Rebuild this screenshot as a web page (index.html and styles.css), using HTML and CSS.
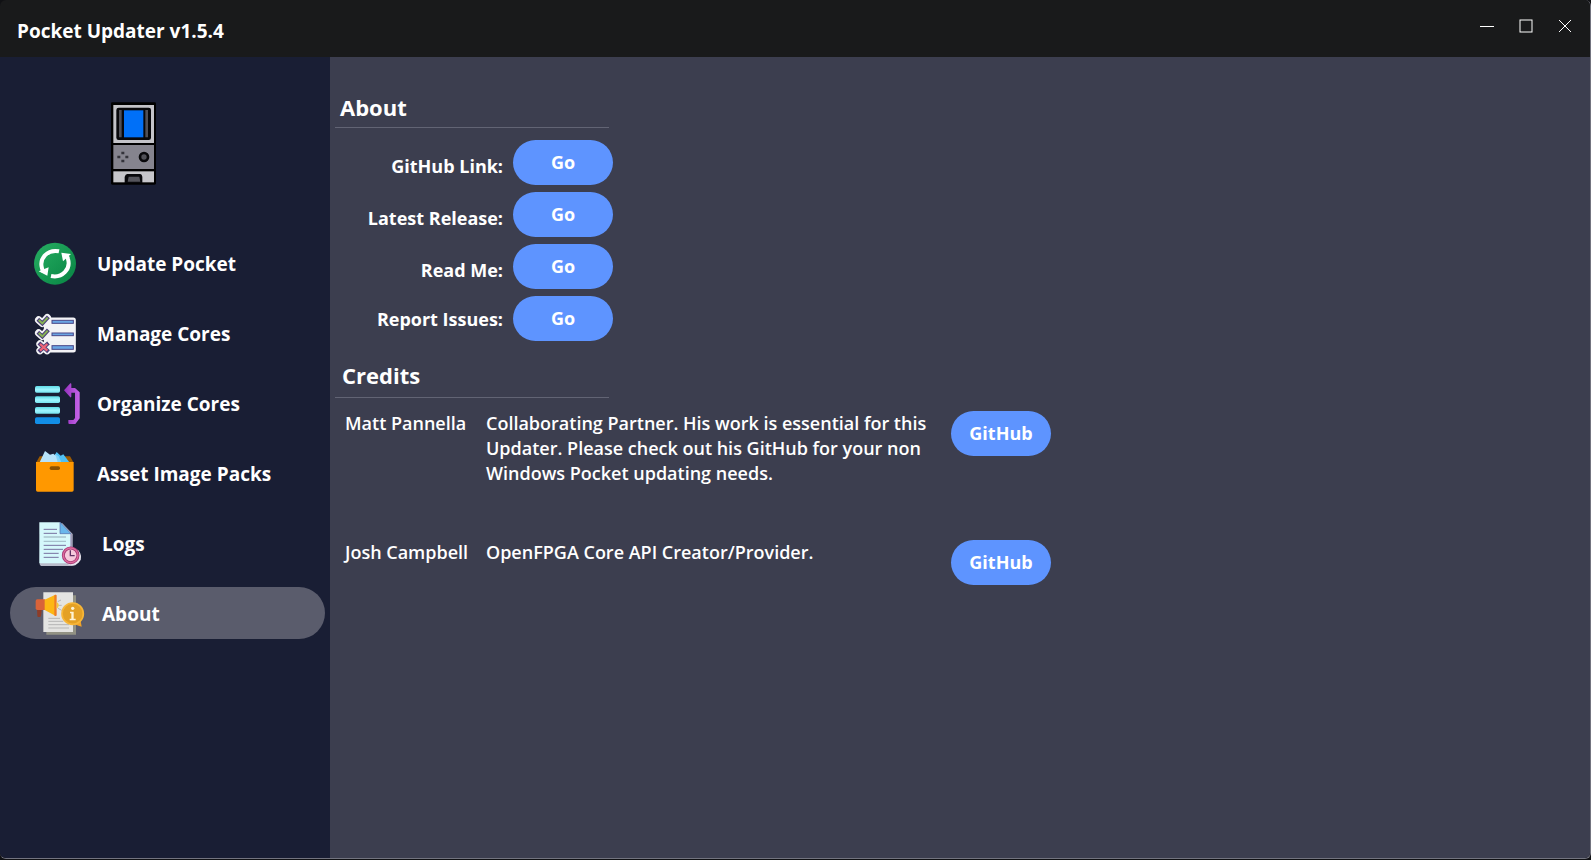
FILE: index.html
```html
<!DOCTYPE html>
<html lang="en">
<head>
<meta charset="utf-8">
<title>Pocket Updater v1.5.4</title>
<link rel="stylesheet" href="styles.css">
</head>
<body>
<div class="window">
  <header class="titlebar">
    <h1 class="titlebar-text">Pocket Updater v1.5.4</h1>
    <div class="window-controls">
      <button class="control" type="button" aria-label="Minimize"><svg viewBox="0 0 14 14"><path d="M0 7.500h14" /></svg></button>
      <button class="control" type="button" aria-label="Maximize"><svg viewBox="0 0 14 14"><rect x="1" y="1" width="12" height="12" /></svg></button>
      <button class="control" type="button" aria-label="Close"><svg viewBox="0 0 14 14"><path d="M1 1l12 12M13 1L1 13" /></svg></button>
    </div>
  </header>
  <div class="body">
    <aside class="sidebar">
      <svg class="logo" viewBox="333 307 135 247" aria-hidden="true">
        <rect x="333" y="307" width="135" height="247" rx="4" fill="#000"/>
        <rect x="340" y="315" width="122" height="114" fill="#c3c3c8"/>
        <rect x="349" y="323" width="104" height="97" rx="7" fill="#08080b"/>
        <path d="M357 330h8v82h-8zM436 330h8v82h-8z" fill="#505057"/>
        <rect x="372" y="331" width="58" height="81" fill="#0070f8"/>
        <rect x="340" y="435" width="122" height="72" fill="#85848e"/>
        <path d="M364 455h9v8h-9zM352 467h9v8h-9zM376 467h9v8h-9zM364 479h9v8h-9z" fill="#33333a"/>
        <circle cx="432" cy="471" r="12" fill="#505057" stroke="#08080b" stroke-width="8"/>
        <rect x="340" y="514" width="122" height="33" fill="#c6c6ca"/>
        <path d="M374 549v-18q2-9 8-9h38q6 0 7 9v18z" fill="#08080b"/>
        <path d="M383 545l3-15h32l3 15z" fill="#55555c"/>
      </svg>
      <nav class="nav">
        <button class="nav-item" type="button">
          <svg class="nav-icon" viewBox="36 27 162 144" aria-hidden="true">
            <defs><linearGradient id="green" x1="0" y1="0" x2="1" y2="1"><stop offset="0" stop-color="#27ae62"/><stop offset="1" stop-color="#078443"/></linearGradient></defs>
            <circle cx="105" cy="101" r="63" fill="url(#green)"/>
            <path d="M117 64C83 57 57 85 66 115c1 5 3 8 5 11M93 138c34 7 60-21 51-51-1-5-3-8-5-11" fill="none" stroke="#fff" stroke-width="12"/>
            <path d="M56 124l30-12-4 25zM124 68l29 4-24 22z" fill="#fff"/>
          </svg>
          <span class="nav-text">Update Pocket</span>
        </button>
        <button class="nav-item" type="button">
          <svg class="nav-icon" viewBox="36 237 162 144" aria-hidden="true">
            <g fill="#f3f3f6" stroke="#f3f3f6" stroke-linejoin="round" stroke-linecap="round">
              <rect x="74" y="265" width="91" height="100" rx="5" stroke-width="5"/>
              <path d="M56 270l11 10 15-17M56 309l11 10 15-17M60 342l21 20M81 342l-21 20" stroke-width="22"/>
            </g>
            <g fill="none" stroke="#4a3f78" stroke-width="12" stroke-linecap="square">
              <path d="M58 272l9 8 14-15M58 311l9 8 14-15M61 343l20 18M81 343l-20 18"/>
            </g>
            <path d="M56 270l11 10 16-17M56 309l11 10 16-17" fill="none" stroke="#87b254" stroke-width="6"/>
            <path d="M60 342l22 20M82 342l-22 20" stroke="#ef6578" stroke-width="7"/>
            <g fill="#6aa5e4" stroke="#4a4788" stroke-width="3">
              <rect x="96" y="271" width="64" height="9"/><rect x="96" y="309" width="64" height="8"/><rect x="96" y="347" width="64" height="11"/>
            </g>
          </svg>
          <span class="nav-text">Manage Cores</span>
        </button>
        <button class="nav-item" type="button">
          <svg class="nav-icon" viewBox="36 27 162 144" aria-hidden="true">
            <defs>
              <linearGradient id="aqua" x1="0" y1="0" x2="0" y2="1"><stop offset="0" stop-color="#60dce8"/><stop offset=".55" stop-color="#a0f5ff"/><stop offset="1" stop-color="#78e4f0"/></linearGradient>
              <linearGradient id="violet" x1="0" y1="0" x2="1" y2="0"><stop offset="0" stop-color="#9530be"/><stop offset="1" stop-color="#c565e8"/></linearGradient>
            </defs>
            <g fill="url(#aqua)"><rect x="45" y="48" width="75" height="20" rx="5"/><rect x="45" y="79" width="75" height="20" rx="5"/><rect x="45" y="111" width="75" height="20" rx="5"/></g>
            <rect x="45" y="142" width="75" height="20" rx="5" fill="#128ee6"/>
            <path d="M132 61l19-21q3-1 3 3v11h11l14 13v78l-13 17h-18q-3 0-3-4v-8h15l5-6V68h-11v11q0 4-3 3z" fill="url(#violet)"/>
          </svg>
          <span class="nav-text">Organize Cores</span>
        </button>
        <button class="nav-item" type="button">
          <svg class="nav-icon" viewBox="36 237 162 144" aria-hidden="true">
            <path d="M48 278l11-19h91l11 19z" fill="#9c5a00"/>
            <path d="M90 277l20-31 12 11 8-4 18 24z" fill="#4fc0f5"/>
            <path d="M86 277l20-25 10 7 8 18z" fill="#81d4fa"/>
            <path d="M59 277l16-34 15 11 10-3 8 8 5 18z" fill="#b7e3fa"/>
            <path d="M48 276h113v84q0 5-5 5H53q-5 0-5-5z" fill="#ff9800"/>
            <rect x="89" y="289" width="31" height="11" rx="5" fill="#8c5200"/>
          </svg>
          <span class="nav-text">Asset Image Packs</span>
        </button>
        <button class="nav-item" type="button">
          <svg class="nav-icon nav-icon-wide" viewBox="96 27 177 144" aria-hidden="true">
            <path d="M121 46l66-6 31 32v45l24 18v15l-16 16q-5 2-12 2h-91q-5-3-4-9z" fill="#b9bccb"/>
            <path d="M118 37h62l33 35v88h-95z" fill="#d5f8fb"/>
            <path d="M213 72v50" stroke="#8a78a6" stroke-width="3"/>
            <path d="M180 37l33 34h-33z" fill="#69b7ec" stroke="#5268a8" stroke-width="2"/>
            <path d="M131 58h40M131 70h40M131 106h67M131 118h58M131 130h45M131 142h45" stroke="#76709f" stroke-width="3"/>
            <path d="M131 81h67M131 94h67" stroke="#a9c3ce" stroke-width="4"/>
            <circle cx="217" cy="140" r="26" fill="#e9e5ed"/>
            <circle cx="212" cy="136" r="22" fill="#f6c9db" stroke="#a63b77" stroke-width="9"/>
            <circle cx="212" cy="136" r="22" fill="none" stroke="#df6c9d" stroke-width="4"/>
            <path d="M211 121v16h13" fill="none" stroke="#603465" stroke-width="4"/>
          </svg>
          <span class="nav-text">Logs</span>
        </button>
        <button class="nav-item nav-item-active" type="button" aria-current="page">
          <svg class="nav-icon nav-icon-wide" viewBox="96 237 177 144" aria-hidden="true">
            <path d="M139 256h89v118h-89z" fill="#929284"/>
            <path d="M130 247h89v119h-89z" fill="#e4e4e2"/>
            <path d="M173 275l10-5M175 286h10M174 295l11 6M145 325h35M145 334h45M145 344h62M145 354h62" stroke="#b5b5b5" stroke-width="3"/>
            <path d="M111 295h15l-3 23q-1 3-5 3h-3q-3 0-3-3z" fill="#8e3d28"/>
            <path d="M112 268h24v32h-24q-5 0-5-5v-22q0-5 5-5z" fill="#d96339"/>
            <path d="M134 269l32-15v63l-32-17z" fill="#fdb714"/>
            <rect x="163" y="254" width="7" height="64" rx="3" fill="#ee7d25"/>
            <path d="M170 276q13 8 0 21z" fill="#f8c73a"/>
            <path d="M242 333l3 17-25-8z" fill="#f0a42a"/>
            <circle cx="218" cy="311" r="32" fill="#e4a125" stroke="#f7b637" stroke-width="5"/>
            <circle cx="218" cy="295" r="5" fill="#fff4d4"/>
            <path d="M210 305h11v21h6v5h-18v-5h5v-16h-4z" fill="#fff4d4"/>
          </svg>
          <span class="nav-text">About</span>
        </button>
      </nav>
    </aside>
    <main class="content">
      <section class="about">
        <h2 class="heading">About</h2>
        <div class="link-grid">
          <label class="link-label" for="go-github">GitHub Link:</label>
          <button class="button" id="go-github" type="button">Go</button>
          <label class="link-label" for="go-release">Latest Release:</label>
          <button class="button" id="go-release" type="button">Go</button>
          <label class="link-label" for="go-readme">Read Me:</label>
          <button class="button" id="go-readme" type="button">Go</button>
          <label class="link-label link-label-centered" for="go-issues">Report Issues:</label>
          <button class="button" id="go-issues" type="button">Go</button>
        </div>
      </section>
      <section class="credits">
        <h2 class="heading heading-credits">Credits</h2>
        <div class="credit">
          <h3 class="credit-name">Matt Pannella</h3>
          <p class="credit-text">Collaborating Partner. His work is essential for this Updater. Please check out his GitHub for your non Windows Pocket updating needs.</p>
          <button class="button" type="button">GitHub</button>
        </div>
        <div class="credit">
          <h3 class="credit-name">Josh Campbell</h3>
          <p class="credit-text">OpenFPGA Core API Creator/Provider.</p>
          <button class="button" type="button">GitHub</button>
        </div>
      </section>
    </main>
  </div>
</div>
</body>
</html>
```
FILE: styles.css
```css
* {
  box-sizing: border-box;
}

body {
  margin: 0;
  padding-bottom: 1px;
  min-height: 100vh;
  display: flex;
  background: #101114;
  color: #fff;
  font: 700 18px/25px "Open Sans", "Noto Sans", sans-serif;
}

h1, h2, h3, p {
  margin: 0;
  font: inherit;
}

button {
  margin: 0;
  padding: 0;
  border: 0;
  background: none;
  color: inherit;
  font: inherit;
}

.window {
  flex: 1;
  display: flex;
  flex-direction: column;
  overflow: hidden;
  border: solid #73747f;
  border-width: 0 1px 1px 0;
  border-radius: 6px;
}

.titlebar {
  display: flex;
  justify-content: space-between;
  height: 57px;
  padding: 0 6px 0 17px;
  background: #191a1b;
}

.titlebar-text {
  padding-top: 19px;
  font-size: 19px;
}

.window-controls {
  display: flex;
  padding-top: 6px;
}

.control {
  display: grid;
  place-items: center;
  width: 39px;
  height: 40px;
}

.control svg {
  width: 14px;
  height: 14px;
  fill: none;
  stroke: #fff;
  stroke-width: 1;
}

.body {
  flex: 1;
  display: flex;
}

.sidebar {
  flex: none;
  width: 330px;
  padding: 45px 5px 0 10px;
  background: #191e34;
}

.logo {
  display: block;
  width: 45px;
  height: 83px;
  margin-left: 101px;
}

.nav {
  display: flex;
  flex-direction: column;
  gap: 18px;
  margin-top: 52px;
}

.nav-item {
  display: flex;
  align-items: center;
  gap: 11px;
  height: 52px;
  padding: 0 22px;
  border-radius: 26px;
  font-size: 19px;
  text-align: left;
}

.nav-item-active {
  background: #5a5c6c;
}

.nav-icon {
  flex: none;
  width: 54px;
  height: 48px;
}

.nav-icon-wide {
  width: 59px;
}

.nav-text {
  padding-top: 3px;
}

.content {
  flex: 1;
  padding: 34px 5px;
  background: #3c3e4f;
}

.heading {
  width: 274px;
  padding: 0 5px 4px;
  border-bottom: 1px solid #626474;
  font-size: 22px;
  line-height: 32px;
}

.heading-credits {
  padding: 0 7px 6px;
}

.link-grid {
  display: grid;
  grid-template-columns: 168px 100px;
  gap: 7px 10px;
  margin-top: 12px;
}

.link-label {
  padding-top: 14px;
  text-align: right;
}

.link-label-centered {
  padding-top: 11px;
}

.button {
  width: 100px;
  height: 45px;
  border-radius: 23px;
  background: #5e94ff;
}

.credits {
  margin-top: 18px;
}

.credit {
  display: grid;
  grid-template-columns: 141px 465px 100px;
  align-items: start;
  min-height: 129px;
  padding: 13px 10px 0;
}

.credit-name,
.credit-text {
  font-weight: 600;
}
```
